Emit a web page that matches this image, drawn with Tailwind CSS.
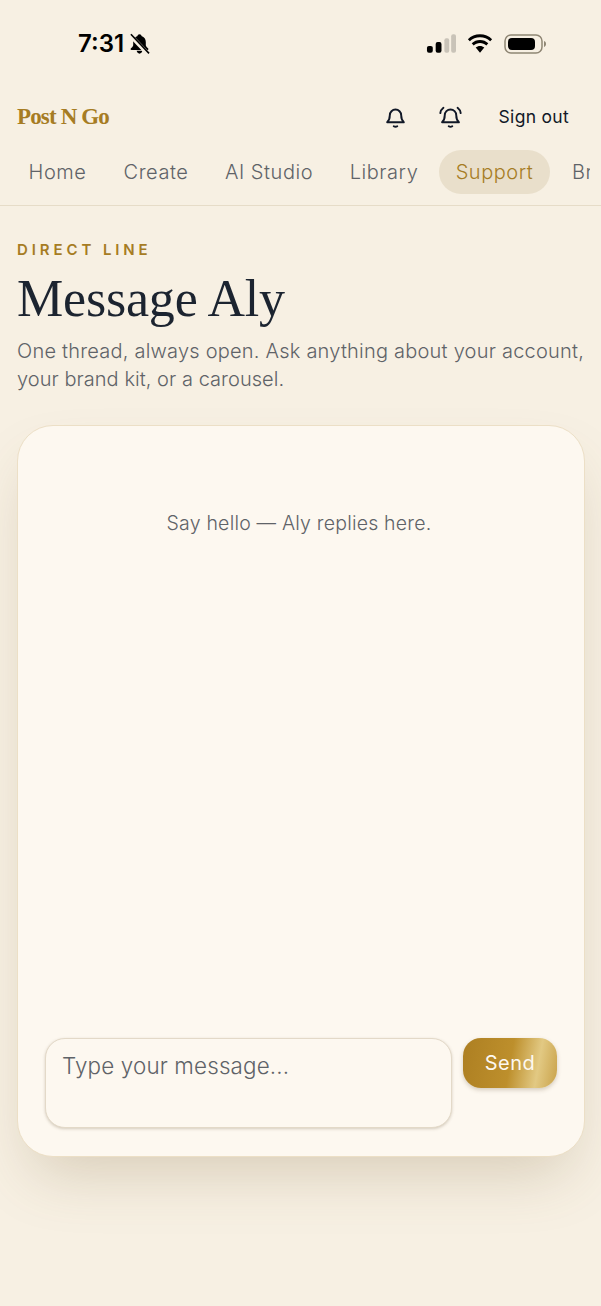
<!DOCTYPE html>
<html lang="en">
<head>
  <meta charset="UTF-8">
  <meta name="viewport" content="width=device-width, initial-scale=1.0">
  <title>Message Aly</title>
  <script src="https://cdn.jsdelivr.net/npm/@tailwindcss/browser@4"></script>
</head>
<body class="bg-[#f7f0e3] font-['Inter',sans-serif] overflow-hidden">
  <div class="w-[601px] h-[1306px] overflow-hidden flex flex-col">
    <!-- status bar -->
    <div class="h-[88px] flex items-start justify-between pt-[28px] pl-[78px] pr-[55px] shrink-0">
      <div class="flex items-center gap-[5px] h-[32px]">
        <span class="text-[24px] leading-none font-semibold text-black">7:31</span>
        <svg width="21" height="22" viewBox="0 0 22 22">
          <path d="M11 .8c-1.200 0-2 .8-2.100 1.800C6 3.500 4.400 6 4.400 9v3.300c0 1.200-1.500 2.400-2.500 3.500-.6.700-.1 1.500.7 1.500h16.800c.8 0 1.300-.8.700-1.500-1-1.100-2.500-2.300-2.500-3.500V9c0-3-1.600-5.500-4.500-6.400C13 1.600 12.200.8 11 .8z" fill="#000"/>
          <path d="M8 18.200c.3 1.700 1.500 2.900 3 2.900s2.700-1.200 3-2.900z" fill="#000"/>
          <path d="M1 1.500l19 20" stroke="#f7f0e3" stroke-width="4.500"/>
          <path d="M2 .8l19 20" stroke="#000" stroke-width="1.700"/>
        </svg>
      </div>
      <div class="flex items-center gap-[10px] h-[32px]">
        <svg width="30" height="20" viewBox="0 0 31 20">
          <rect x="1" y="12" width="6" height="7" rx="2" fill="#000"/>
          <rect x="10" y="8" width="6" height="11" rx="2" fill="#000"/>
          <rect x="19" y="4" width="5" height="15" rx="2" fill="#c9c3b8"/>
          <rect x="26" y="0" width="5" height="19" rx="2" fill="#c9c3b8"/>
        </svg>
        <svg width="28" height="20" viewBox="0 0 28 20">
          <path d="M14 3.200c4 0 7.500 1.500 10.200 4.100l1.900-2.100C23 2.100 18.700.3 14 .3S5 2.100 1.900 5.200l1.900 2.100C6.500 4.700 10 3.200 14 3.200z" fill="#000"/>
          <path d="M14 9c2.500 0 4.700 1 6.300 2.500l2-2.200C20.100 7.200 17.200 6 14 6s-6.100 1.200-8.300 3.300l2 2.200C9.300 10 11.500 9 14 9z" fill="#000"/>
          <path d="M14 12c-1.700 0-3.100.6-4.300 1.600l4.300 5.200 4.300-5.200C17.100 12.600 15.700 12 14 12z" fill="#000"/>
        </svg>
        <svg width="42" height="20" viewBox="0 0 42 20">
          <rect x="1" y="1" width="37" height="18" rx="6" fill="none" stroke="#8f8674" stroke-width="1.500"/>
          <rect x="4" y="4" width="27" height="12" rx="4" fill="#000"/>
          <path d="M40 7c1.300.4 2 1.600 2 3s-.7 2.600-2 3z" fill="#8f8674"/>
        </svg>
      </div>
    </div>

    <!-- header -->
    <div class="h-[58px] flex items-center justify-between pl-[17px] pr-[32px] shrink-0">
      <span class="font-['Liberation_Serif',serif] font-bold text-[23px] text-[#a67c23] tracking-[-0.85px]">Post N Go</span>
      <div class="flex items-center">
        <svg class="mr-[33px]" width="21" height="24" viewBox="0 0 24 26" fill="none" stroke="#111827" stroke-width="2.200" stroke-linecap="round" stroke-linejoin="round">
          <path d="M5.500 11a6.500 6.500 0 0 1 13 0c0 5 1.500 6.500 3 8H2.500c1.500-1.500 3-3 3-8z"/>
          <path d="M10 23.500c1.200.8 2.800.8 4 0"/>
        </svg>
        <svg class="mr-[37px]" width="23" height="24" viewBox="0 0 26 26" fill="none" stroke="#111827" stroke-width="2.200" stroke-linecap="round" stroke-linejoin="round">
          <path d="M6.500 11a6.500 6.500 0 0 1 13 0c0 5 1.500 6.500 3 8H3.500c1.500-1.500 3-3 3-8z"/>
          <path d="M11 23.500c1.200.8 2.800.8 4 0"/>
          <path d="M5 2.500C3 4 1.800 6 1.500 8.500M21 2.500C23 4 24.200 6 24.500 8.500"/>
        </svg>
        <span class="text-[17.500px] text-[#111827] tracking-[0.3px]">Sign out</span>
      </div>
    </div>

    <!-- nav -->
    <div class="h-[60px] pt-[4px] border-b border-[#e6dcc8] shrink-0">
      <div class="w-[590px] pl-[12px] flex items-start gap-[6px] whitespace-nowrap overflow-hidden text-[20px] font-[350] text-[#5f6368] tracking-[0.55px]">
        <a class="h-[44px] w-[91px] shrink-0 flex items-center justify-center rounded-full">Home</a>
        <a class="h-[44px] w-[94px] shrink-0 flex items-center justify-center rounded-full">Create</a>
        <a class="h-[44px] w-[120px] shrink-0 flex items-center justify-center rounded-full">AI Studio</a>
        <a class="h-[44px] w-[98px] shrink-0 flex items-center justify-center rounded-full">Library</a>
        <a class="h-[44px] w-[111px] shrink-0 flex items-center justify-center rounded-full bg-[#e9dfcb] text-[#a67c23]">Support</a>
        <a class="h-[44px] px-[16px] shrink-0 flex items-center rounded-full">Brand</a>
      </div>
    </div>

    <!-- page title -->
    <div class="px-[17px] pt-[35px]">
      <p class="text-[15px] leading-[18px] font-semibold tracking-[3.900px] text-[#a67c23]">DIRECT LINE</p>
      <h1 class="font-['Liberation_Serif',serif] text-[52px] leading-[60px] mt-[10px] text-[#1c2430] tracking-[-0.2px]">Message Aly</h1>
      <p class="text-[20px] leading-[28px] mt-[8px] font-[350] text-[#5f6368] whitespace-nowrap">
        <span class="block tracking-[0.22px]">One thread, always open. Ask anything about your account,</span>
        <span class="block tracking-[0.05px]">your brand kit, or a carousel.</span>
      </p>
    </div>

    <!-- chat card -->
    <div class="ml-[17px] w-[568px] mt-[32px] h-[732px] rounded-[36px] border border-[#ecdfc6] bg-[#fdf8f0] shadow-[0_30px_60px_-16px_rgba(120,95,50,0.25)] flex flex-col justify-between px-[27px] pb-[28px] shrink-0">
      <p class="text-center text-[19.500px] font-[350] text-[#5f6368] pt-[83px] pr-[4px] tracking-[0.2px]">Say hello — Aly replies here.</p>
      <div class="flex items-start gap-[11px]">
        <div class="w-[407px] h-[90px] rounded-[20px] border border-[#e3d9c8] bg-[#fdf8f0] shadow-[0_1px_3px_rgba(90,70,40,0.25)] px-[16px] py-[12px] text-[22.400px] font-[350] leading-[30px] text-[#5f6368] tracking-[0.15px]">Type your message...</div>
        <button class="w-[94px] h-[50px] rounded-[18px] bg-[linear-gradient(100deg,#ad7f22_0%,#bd8f2c_50%,#e2c983_78%,#c9a24a_100%)] shadow-[0_2px_4px_rgba(90,70,40,0.25)] text-[20px] text-[#fdf8f0] tracking-[0.5px]">Send</button>
      </div>
    </div>
  </div>
</body>
</html>
